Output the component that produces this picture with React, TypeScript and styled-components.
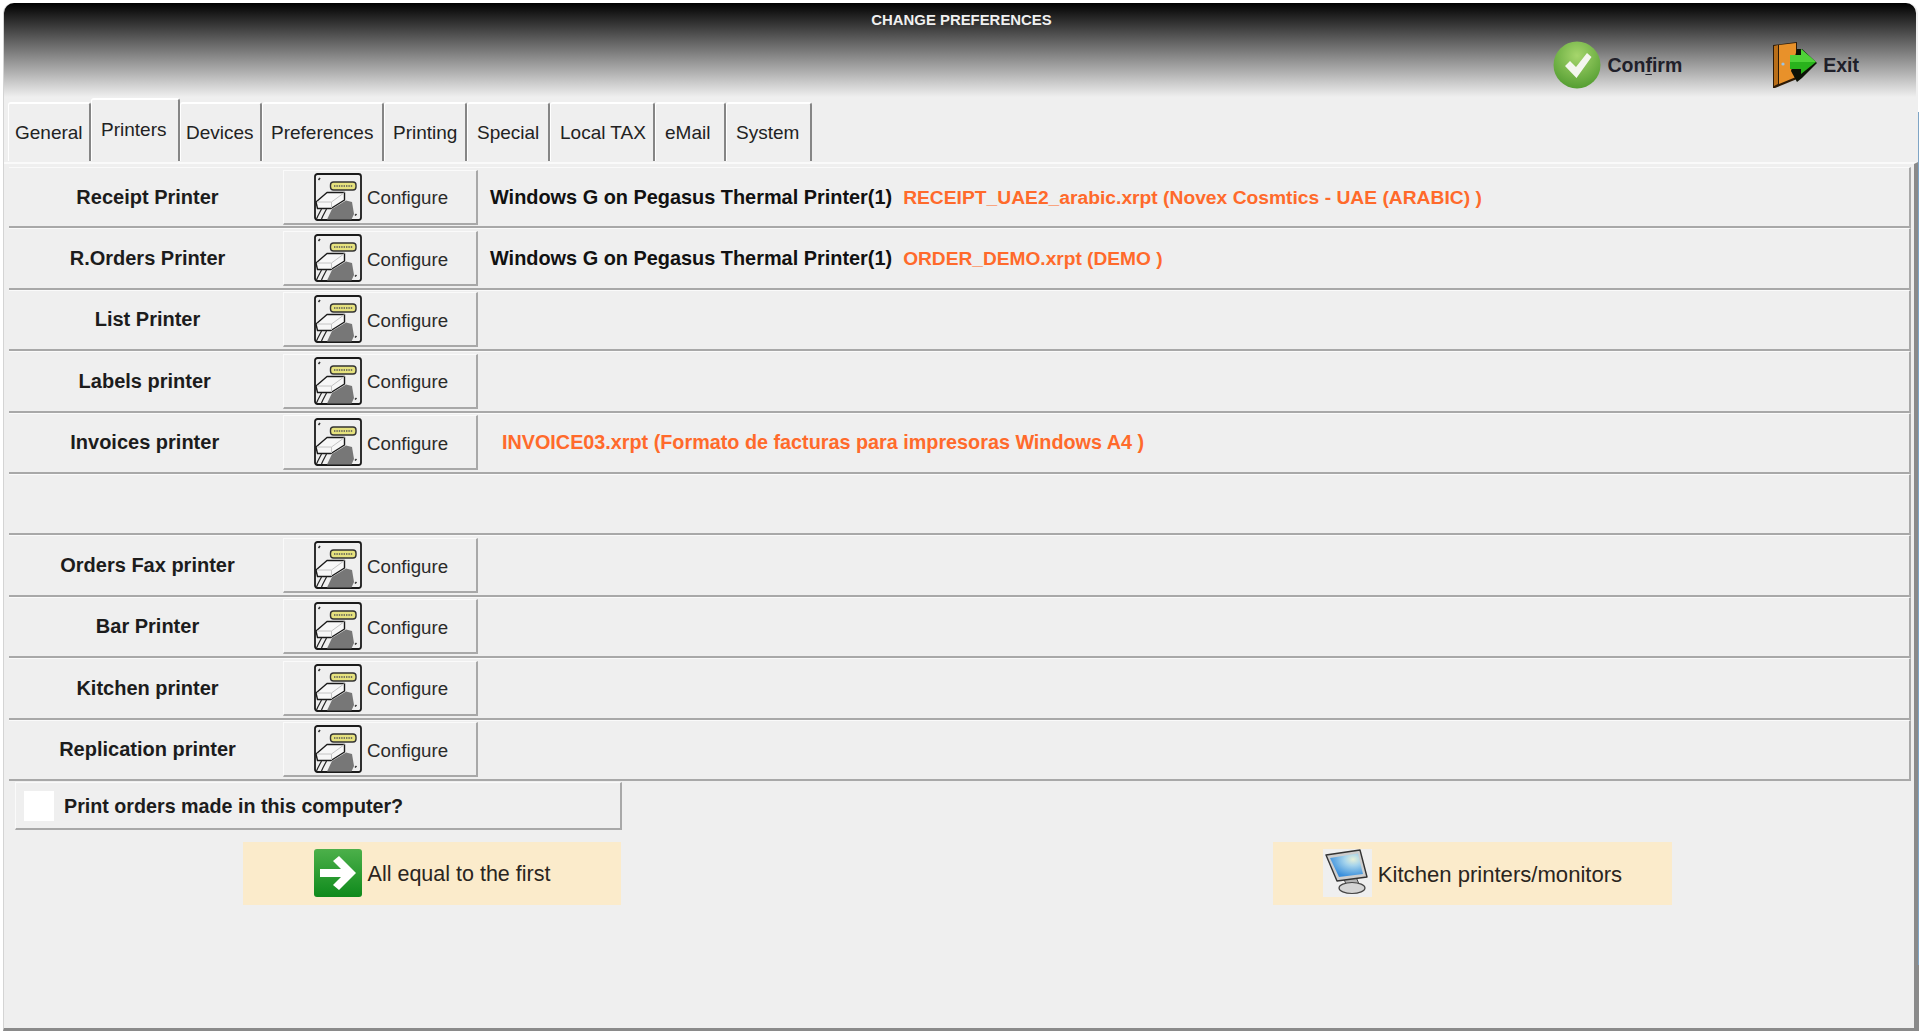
import React from "react";
import styled, { createGlobalStyle } from "styled-components";

const GlobalStyle = createGlobalStyle`
  html, body {
    margin: 0;
    padding: 0;
    background: #fff;
    overflow: hidden;
  }
  * {
    box-sizing: border-box;
  }
`;

const Page = styled.div`
  width: 1919px;
  height: 1031px;
  padding: 3px 1px 0 3px;
  font-family: "Liberation Sans", Arial, sans-serif;
  color: #1c1c1c;
  background: linear-gradient(#fff 112px, #7fa5c6 112px, #7fa5c6 965px, #8a8a8a 965px) right top / 1px 100% no-repeat, #fff;
`;

const Window = styled.div`
  height: 1028px;
  display: flex;
  flex-direction: column;
  background: #efefef;
  border-radius: 10px 10px 0 0;
  border-left: 1px solid #d4d4d4;
  border-bottom: 3px solid #8a8a8a;
`;

const Header = styled.header`
  height: 94px;
  margin-right: 2px;
  background: linear-gradient(#000 0%, #efefef 100%);
  border-radius: 10px 10px 0 0;
  display: flex;
  flex-direction: column;
`;

const Title = styled.div`
  height: 34px;
  padding: 9px 0 0 3px;
  text-align: center;
  font-size: 14.9px;
  line-height: 17px;
  font-weight: 700;
  color: #f0f0f0;
`;

const Actions = styled.div`
  display: flex;
  justify-content: flex-end;
  gap: 91px;
  padding-right: 57px;
  margin-top: 4px;
`;

const Action = styled.div`
  display: flex;
  align-items: center;
  gap: 6px;
  height: 48px;
  font-size: 19.5px;
  font-weight: 700;
  color: #20202a;
  span {
    padding-top: 1px;
  }
  u {
    text-underline-offset: 2px;
  }
`;

const TabBar = styled.div`
  height: 65px;
  display: flex;
  align-items: flex-end;
  padding: 0 0 1px 4px;
`;

const Tab = styled.div<{ $w: number; $pad: number; $active?: boolean }>`
  width: ${(p) => p.$w}px;
  height: ${(p) => (p.$active ? 63 : 59)}px;
  display: flex;
  align-items: ${(p) => (p.$active ? "flex-start" : "center")};
  padding-left: ${(p) => p.$pad}px;
  padding-top: ${(p) => (p.$active ? 19 : 0)}px;
  font-size: 19px;
  line-height: 22px;
  color: #222;
  background: #efefef;
  border-top: 2px solid #fff;
  border-left: 1px solid #fff;
  border-right: 2px solid #858585;
  border-radius: 3px 3px 0 0;
  white-space: nowrap;
`;

const Panel = styled.main`
  flex: 1;
  border-top: 2px solid #fafafa;
  border-right: 4px solid #8a8a8a;
  padding: 3px 3px 0 5px;
`;

const List = styled.div`
  display: flex;
  flex-direction: column;
`;

const Row = styled.div`
  height: 61.4px;
  display: grid;
  grid-template-columns: 274px 195px 1fr;
  align-items: center;
  border-bottom: 2px solid #a8a8a8;
  border-top: 1px solid #fafafa;
  border-right: 2px solid #a8a8a8;
`;

const Label = styled.div`
  padding-left: 3px;
  text-align: center;
  font-size: 20px;
  font-weight: 700;
  white-space: pre;
`;

const ConfigureButton = styled.div`
  height: 55px;
  display: flex;
  align-items: center;
  gap: 5px;
  padding-left: 30px;
  font-size: 18.7px;
  color: #2a2a2a;
  border-top: 1px solid #fafafa;
  border-left: 1px solid #fafafa;
  border-right: 2px solid #a8a8a8;
  border-bottom: 2px solid #a8a8a8;
`;

const ButtonText = styled.span<{ $drop: number }>`
  padding-top: ${(p) => p.$drop}px;
`;

const Info = styled.div`
  display: flex;
  padding-left: 12px;
  font-size: 19.9px;
  font-weight: 700;
  white-space: pre;
`;

const PrinterName = styled.span`
  color: #111;
`;

const ReportName = styled.span<{ $size: number }>`
  margin-left: 11px;
  font-size: ${(p) => p.$size}px;
  line-height: 23px;
  color: #ff6a2b;
  &:first-child {
    margin-left: 12px;
  }
`;

const CheckRow = styled.div`
  width: 607px;
  height: 48px;
  margin: 1px 0 0 6px;
  display: flex;
  align-items: center;
  gap: 10px;
  padding: 2px 0 0 8px;
  font-size: 19.7px;
  font-weight: 700;
  border-top: 1px solid #fafafa;
  border-left: 1px solid #fafafa;
  border-right: 2px solid #a8a8a8;
  border-bottom: 2px solid #a8a8a8;
`;

const CheckBox = styled.div`
  width: 30px;
  height: 30px;
  background: #fff;
`;

const Footer = styled.div`
  display: flex;
  gap: 652px;
  margin: 12px 0 0 234px;
`;

const WideButton = styled.div<{ $w: number; $size: number }>`
  width: ${(p) => p.$w}px;
  height: 63px;
  display: flex;
  align-items: center;
  justify-content: center;
  gap: 6px;
  background: #fbebcb;
  font-size: ${(p) => p.$size}px;
  color: #2a2520;
`;

const MonitorTile = styled.div`
  width: 49px;
  height: 48px;
  background: #efefef;
  display: flex;
`;

function PrinterPortIcon() {
  return (
    <svg width="48" height="48" viewBox="0 0 48 48">
      <rect x="1" y="1" width="46" height="46" rx="2.5" fill="#efefef" stroke="#1a1a1a" strokeWidth="1.8" />
      <path d="M4.5 7l1.500-2M41 42.500l1.500-1.500" stroke="#333" strokeWidth="1.6" />
      <rect x="16.5" y="9" width="25.500" height="8" rx="3" fill="#e6e27e" stroke="#333" strokeWidth="1.4" />
      <path d="M20 13h19" stroke="#555" strokeWidth="1.4" strokeDasharray="1.4 1" />
      <path d="M18 36l14-8.500 6 1.500 2 12-2.500 5.500H13z" fill="#777" />
      <path d="M2 29L13 19.500h17.500V27L17 35.500H3.500z" fill="#f7f7f7" stroke="#1a1a1a" strokeWidth="1.4" strokeLinejoin="round" />
      <path d="M3 29h14.500l13-9.500M17.500 29v6" stroke="#c4c4c4" strokeWidth="1" fill="none" />
      <path d="M7.500 36C6 39 4 42 2.500 46M12.500 36C11 39 9 42 7.500 46" stroke="#222" strokeWidth="1.2" fill="none" />
    </svg>
  );
}

function ConfirmIcon() {
  return (
    <svg width="48" height="48" viewBox="0 0 48 48">
      <defs>
        <radialGradient id="confirmFill" cx="50%" cy="30%" r="75%">
          <stop offset="0%" stopColor="#a6d66c" />
          <stop offset="100%" stopColor="#4f9a2e" />
        </radialGradient>
      </defs>
      <circle cx="24" cy="24" r="23.5" fill="url(#confirmFill)" />
      <path d="M12 25l5-5 6 6 11-14 4.500 4L23.500 37z" fill="#f4f6ee" />
    </svg>
  );
}

function ExitIcon() {
  return (
    <svg width="44" height="48" viewBox="0 0 44 48">
      <path d="M0 4l24-3v37L2 47H0z" fill="#2d1a06" />
      <path d="M1 5l4-1v39l-4 2z" fill="#b96e18" />
      <path d="M6 4l17-2v34L6 43z" fill="#e8912a" />
      <circle cx="10" cy="23" r="1.600" fill="#9cc4e4" />
      <path d="M24 8h5l15 14-15 15-5 4-6-11z" fill="#0c1206" />
      <path d="M17 14h11V8l15 13-15 12v-5H17z" fill="#29b31c" />
      <path d="M17 14h11V8l15 13H17z" fill="#4fd238" />
    </svg>
  );
}

function ArrowTileIcon() {
  return (
    <svg width="48" height="48" viewBox="0 0 48 48">
      <defs>
        <linearGradient id="arrowFill" x1="0" y1="0" x2="0" y2="1">
          <stop offset="0%" stopColor="#4cb04a" />
          <stop offset="100%" stopColor="#0f8a1c" />
        </linearGradient>
      </defs>
      <rect width="48" height="48" rx="3" fill="url(#arrowFill)" />
      <path d="M25 7l17 17-17 17-6-5 8-8H6v-8h21l-8-8z" fill="#fff" />
    </svg>
  );
}

function MonitorIcon() {
  return (
    <svg width="49" height="48" viewBox="0 0 49 48">
      <defs>
        <radialGradient id="screenFill" cx="70%" cy="25%" r="75%">
          <stop offset="0%" stopColor="#e6f0d8" />
          <stop offset="35%" stopColor="#a6d4ec" />
          <stop offset="100%" stopColor="#3a8fdc" />
        </radialGradient>
      </defs>
      <path d="M21 30l12-2 3 7-12 3z" fill="#b4b4b4" stroke="#444" strokeWidth="1" />
      <ellipse cx="29" cy="39" rx="13" ry="5.5" fill="#d4d4d4" stroke="#444" strokeWidth="1.2" />
      <path d="M3 6l34-5 7 27-30 4z" fill="#cdcdcd" stroke="#333" strokeWidth="1.4" strokeLinejoin="round" />
      <path d="M7 9l28-4.500 5 20.500-24 3z" fill="url(#screenFill)" />
    </svg>
  );
}

const tabs = [
  { name: "General", w: 83, pad: 6 },
  { name: "Printers", w: 89, pad: 9, active: true },
  { name: "Devices", w: 82, pad: 5 },
  { name: "Preferences", w: 122, pad: 8 },
  { name: "Printing", w: 83, pad: 8 },
  { name: "Special", w: 83, pad: 9 },
  { name: "Local TAX", w: 105, pad: 9 },
  { name: "eMail", w: 71, pad: 9 },
  { name: "System", w: 86, pad: 9 },
];

const rows = [
  { label: "Receipt Printer", printer: "Windows G on Pegasus Thermal Printer(1)", report: "RECEIPT_UAE2_arabic.xrpt (Novex Cosmtics - UAE (ARABIC) )", size: 19.25 },
  { label: "R.Orders Printer", printer: "Windows G on Pegasus Thermal Printer(1)", report: "ORDER_DEMO.xrpt (DEMO )", size: 19.15 },
  { label: "List Printer" },
  { label: "Labels printer " },
  { label: "Invoices printer ", report: "INVOICE03.xrpt (Formato de facturas para impresoras Windows A4 )", size: 19.8 },
  { label: "" },
  { label: "Orders Fax printer" },
  { label: "Bar Printer" },
  { label: "Kitchen printer" },
  { label: "Replication printer" },
];

export default function App() {
  return (
    <Page>
      <GlobalStyle />
      <Window>
        <Header>
          <Title>CHANGE PREFERENCES</Title>
          <Actions>
            <Action>
              <ConfirmIcon />
              <span>
                Con<u>f</u>irm
              </span>
            </Action>
            <Action>
              <ExitIcon />
              <span>Exit</span>
            </Action>
          </Actions>
        </Header>
        <TabBar>
          {tabs.map((t) => (
            <Tab key={t.name} $w={t.w} $pad={t.pad} $active={t.active}>
              {t.name}
            </Tab>
          ))}
        </TabBar>
        <Panel>
          <List>
            {rows.map((r, i) => (
              <Row key={i}>
                <Label>{r.label}</Label>
                {r.label ? (
                  <ConfigureButton>
                    <PrinterPortIcon />
                    <ButtonText $drop={3}>Configure</ButtonText>
                  </ConfigureButton>
                ) : (
                  <span />
                )}
                <Info>
                  {r.printer && <PrinterName>{r.printer}</PrinterName>}
                  {r.report && <ReportName $size={r.size ?? 19.5}>{r.report}</ReportName>}
                </Info>
              </Row>
            ))}
          </List>
          <CheckRow>
            <CheckBox />
            Print orders made in this computer?
          </CheckRow>
          <Footer>
            <WideButton $w={378} $size={21.5}>
              <ArrowTileIcon />
              <ButtonText $drop={3}>All equal to the first</ButtonText>
            </WideButton>
            <WideButton $w={399} $size={22.1}>
              <MonitorTile>
                <MonitorIcon />
              </MonitorTile>
              <ButtonText $drop={3}>Kitchen printers/monitors</ButtonText>
            </WideButton>
          </Footer>
        </Panel>
      </Window>
    </Page>
  );
}
